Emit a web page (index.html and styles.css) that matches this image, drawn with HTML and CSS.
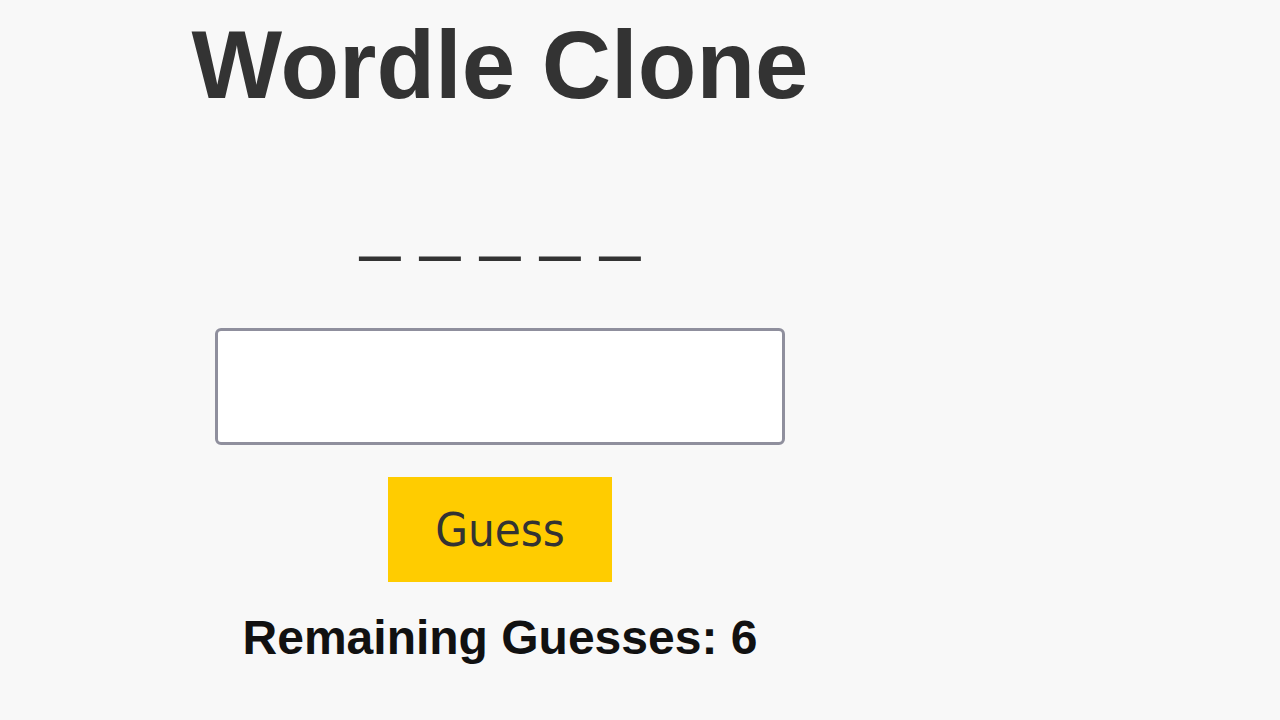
FILE: index.html
```html
<!DOCTYPE html>
<html lang="en">
<head>
<meta charset="utf-8">
<title>Wordle Clone</title>
<link rel="stylesheet" href="styles.css">
</head>
<body>
<main class="app">
  <h1 class="title">Wordle Clone</h1>
  <div class="word">_ _ _ _ _</div>
  <input class="guess-input" type="text" aria-label="Your guess">
  <button class="guess-btn" type="button">Guess</button>
  <p class="remaining">Remaining Guesses: 6</p>
</main>
</body>
</html>
```

FILE: styles.css
```css
html, body {
  margin: 0;
  padding: 0;
  background: #f8f8f8;
}

body {
  font-family: "Liberation Sans", Arial, sans-serif;
}

.app {
  width: 1000px;
  padding-top: 10px;
  display: flex;
  flex-direction: column;
  align-items: center;
  text-align: center;
}

.title {
  margin: 0;
  font-size: 96px;
  line-height: 110px;
  font-weight: 700;
  color: #333333;
}

.word {
  margin-top: 61px;
  font-size: 72px;
  line-height: 83px;
  color: #333333;
  white-space: pre;
}

.guess-input {
  box-sizing: border-box;
  margin-top: 64px;
  width: 570px;
  height: 117px;
  border: 3px solid #8f8f9d;
  border-radius: 6px;
  background: #ffffff;
  padding: 0 12px;
  font-size: 48px;
}

.guess-btn {
  margin-top: 32px;
  width: 224px;
  height: 105px;
  padding: 0;
  border: none;
  background: #ffcc00;
  color: #333333;
  font-family: "DejaVu Sans Condensed", "DejaVu Sans", sans-serif;
  font-stretch: condensed;
  font-size: 47px;
  line-height: 105px;
}

.remaining {
  margin: 28px 0 0;
  font-size: 48px;
  line-height: 55px;
  font-weight: 700;
  color: #111111;
}
```
